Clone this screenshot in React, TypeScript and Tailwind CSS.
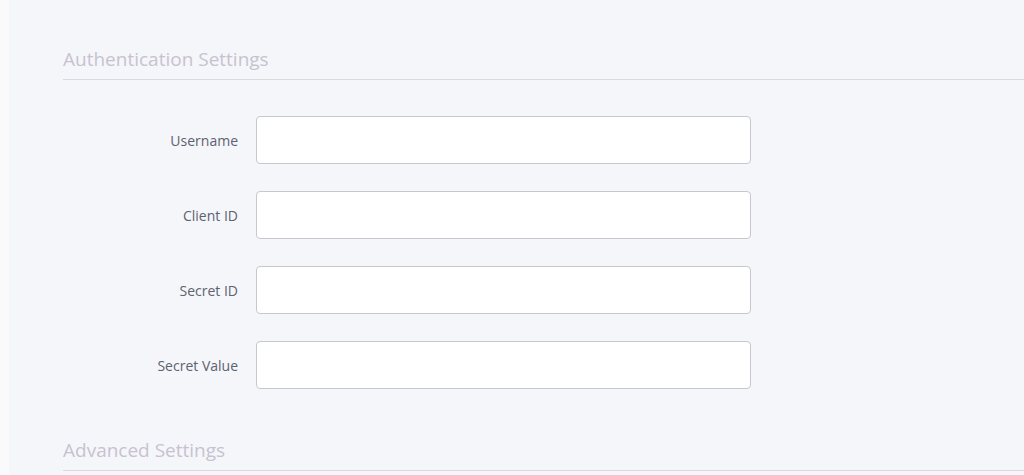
import React from 'react';

const fields = ['Username', 'Client ID', 'Secret ID', 'Secret Value'];

function SectionHeader({ title }: { title: string }) {
  return (
    <div className="border-b border-[#dcdae0] pb-[8px]">
      <h2 className="text-[19px] leading-[24px] text-[#c8c2d0]">{title}</h2>
    </div>
  );
}

function App() {
  return (
    <div
      className="min-h-screen bg-[#fafafc] pl-[9px]"
      style={{ fontFamily: '"Open Sans", "Noto Sans", sans-serif' }}
    >
      <div className="min-h-screen bg-[#f5f6fa] pl-[54px] pt-[47px]">
        <SectionHeader title="Authentication Settings" />

        <div className="flex flex-col gap-[27px] pt-[36px]">
          {fields.map((label) => (
            <div key={label} className="flex items-center">
              <label className="w-[193px] pr-[18px] text-right text-[14px] text-[#5d6270]">
                {label}
              </label>
              <input
                type="text"
                className="h-[48px] w-[495px] rounded-[4px] border border-[#c6c8ce] bg-white px-3 outline-none"
              />
            </div>
          ))}
        </div>

        <div className="pt-[49px]">
          <SectionHeader title="Advanced Settings" />
        </div>
      </div>
    </div>
  );
}

export default App;
